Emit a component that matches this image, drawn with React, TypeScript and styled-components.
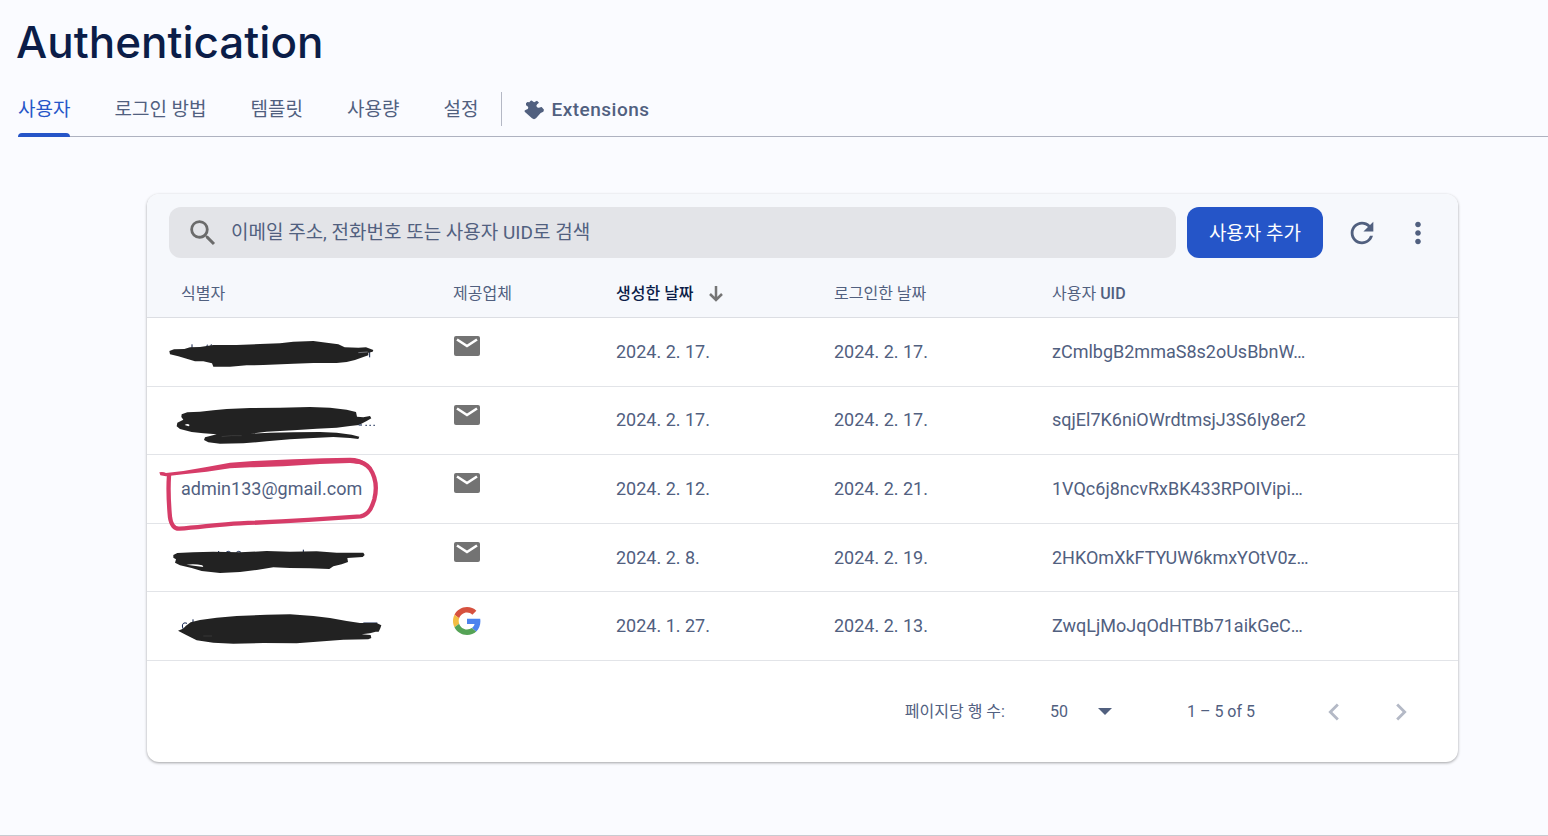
import React from 'react';
import styled, { createGlobalStyle, css } from 'styled-components';

const ink = '#51607f';
const navy = '#0b1d48';
const blue = '#2555c8';
const line = '#e2e4e8';

const GlobalStyle = createGlobalStyle`
  *, *::before, *::after { box-sizing: border-box; }
  body {
    margin: 0;
    background: #fafbff;
    color: ${ink};
    font-family: Roboto, 'Noto Sans CJK KR', sans-serif;
  }
  button, input, select { font: inherit; color: inherit; }
`;

const Page = styled.div`
  display: flex;
  flex-direction: column;
  min-height: 100vh;
  border-bottom: 1px solid #c9cbd1;
`;

const Title = styled.h1`
  margin: 0;
  padding: 15px 16px 0;
  font-family: Inter, sans-serif;
  font-size: 44px;
  line-height: 54px;
  font-weight: 500;
  color: ${navy};
`;

const TabBar = styled.nav`
  display: flex;
  height: 68px;
  margin-left: 18px;
  padding-top: 12px;
  border-bottom: 1px solid #aeb2c0;
`;

const Tab = styled.a<{ $active?: boolean }>`
  position: relative;
  display: flex;
  align-items: center;
  height: 56px;
  margin-right: 44px;
  padding-top: 1px;
  font-size: 19px;
  line-height: 28px;
  white-space: nowrap;
  text-decoration: none;
  color: ${ink};
  ${(p) =>
    p.$active &&
    css`
      color: ${blue};
      &::after {
        content: '';
        position: absolute;
        left: 0;
        right: 0;
        bottom: 0;
        height: 4px;
        border-radius: 4px 4px 0 0;
        background: ${blue};
      }
    `}
`;

const ExtensionsTab = styled(Tab)`
  gap: 7px;
  margin: 0;
  font-weight: 500;
  letter-spacing: 0.5px;
`;

const TabDivider = styled.span`
  width: 1px;
  height: 34px;
  margin: 11px 22px 0 -21px;
  background: #b4b8c5;
`;

const Content = styled.main`
  padding: 57px 90px 73px 147px;
`;

const Card = styled.section`
  overflow: hidden;
  border-radius: 12px;
  background: #fff;
  box-shadow: 0 1px 3px rgba(0, 0, 0, 0.36);
`;

const Toolbar = styled.div`
  display: flex;
  align-items: center;
  padding: 13px 23px 12px 22px;
  background: #f6f8fc;
`;

const SearchBox = styled.label`
  display: flex;
  flex: 1;
  align-items: center;
  gap: 11px;
  height: 51px;
  margin-right: 11px;
  padding: 0 17px;
  border-radius: 12px;
  background: #e3e4e8;
`;

const SearchInput = styled.input`
  flex: 1;
  min-width: 0;
  padding: 0;
  border: 0;
  outline: 0;
  background: none;
  font-size: 19px;
  line-height: 28px;
  &::placeholder { color: ${ink}; opacity: 1; }
`;

const AddButton = styled.button`
  height: 51px;
  padding: 0 22px 3px;
  border: 0;
  border-radius: 12px;
  background: ${blue};
  color: #fff;
  font-size: 19px;
`;

const IconButton = styled.button`
  display: grid;
  place-items: center;
  width: 34px;
  height: 34px;
  padding: 0;
  border: 0;
  background: none;
`;

const ToolActions = styled.div`
  display: flex;
  gap: 22px;
  padding-left: 22px;
`;

const Table = styled.table`
  width: 100%;
  table-layout: fixed;
  border-collapse: separate;
  border-spacing: 0;
  text-align: left;
`;

const Col = styled.col<{ $w?: number }>`
  width: ${(p) => (p.$w ? `${p.$w}px` : 'auto')};
`;

const HeadCell = styled.th<{ $sorted?: boolean }>`
  height: 48px;
  padding: 0;
  border-bottom: 1px solid #dcdee3;
  background: #f6f8fc;
  font-size: 16px;
  line-height: 24px;
  font-weight: ${(p) => (p.$sorted ? 500 : 400)};
  color: ${(p) => (p.$sorted ? navy : ink)};
  &:first-child { padding-left: 34px; }
`;

const Latin = styled.span`
  font-weight: 500;
`;

const SortLabel = styled.span`
  display: flex;
  align-items: center;
  gap: 15px;
`;

const Body = styled.tbody`
  height: 343px;
`;

const Cell = styled.td`
  position: relative;
  padding: 0;
  border-bottom: 1px solid ${line};
  font-size: 18px;
  line-height: 24px;
  &:first-child { padding-left: 34px; }
`;

const ProviderCell = styled(Cell)`
  padding-bottom: 11px;
  svg { display: block; }
`;

const Marker = styled.svg`
  position: absolute;
  top: 0;
  left: 3px;
  width: 240px;
  height: 69px;
  overflow: visible;
  pointer-events: none;
`;

const Pager = styled.div`
  display: flex;
  align-items: center;
  justify-content: flex-end;
  height: 101px;
  padding-right: 40px;
  font-size: 16px;
  line-height: 24px;
`;

const PageSize = styled.label`
  display: flex;
  align-items: center;
  gap: 45px;
`;

const SelectWrap = styled.span`
  display: flex;
  align-items: center;
  width: 62px;
`;

const Select = styled.select`
  flex: 1;
  min-width: 0;
  padding: 0;
  border: 0;
  outline: 0;
  appearance: none;
  background: none;
`;

const Range = styled.span`
  margin: 0 62px 0 75px;
`;

const PageButtons = styled.div`
  display: flex;
  gap: 33px;
`;

const Icon = ({ d, size = 34, fill = ink }: { d: string; size?: number; fill?: string }) => (
  <svg width={size} height={size} viewBox="0 0 24 24" fill={fill} aria-hidden="true">
    <path d={d} />
  </svg>
);

const icons = {
  search:
    'M15.5 14h-.79l-.28-.27A6.471 6.471 0 0 0 16 9.5 6.5 6.5 0 1 0 9.5 16c1.61 0 3.09-.59 4.23-1.57l.27.28v.79l5 4.99L20.49 19l-4.99-5zm-6 0C7.01 14 5 11.99 5 9.5S7.01 5 9.5 5 14 7.01 14 9.5 11.99 14 9.5 14z',
  refresh:
    'M17.65 6.35A7.958 7.958 0 0 0 12 4c-4.42 0-7.99 3.58-7.99 8s3.57 8 7.99 8c3.73 0 6.84-2.55 7.73-6h-2.08A5.99 5.99 0 0 1 12 18c-3.31 0-6-2.69-6-6s2.69-6 6-6c1.66 0 3.14.69 4.22 1.78L13 11h7V4l-2.35 2.35z',
  more:
    'M12 8c1.1 0 2-.9 2-2s-.9-2-2-2-2 .9-2 2 .9 2 2 2zm0 2c-1.1 0-2 .9-2 2s.9 2 2 2 2-.9 2-2-.9-2-2-2zm0 6c-1.1 0-2 .9-2 2s.9 2 2 2 2-.9 2-2-.9-2-2-2z',
  left: 'M15.41 7.41L14 6l-6 6 6 6 1.41-1.41L10.83 12z',
  right: 'M10 6L8.59 7.41 13.17 12l-4.58 4.59L10 18l6-6z',
};

const PuzzleIcon = () => (
  <svg width="20" height="20" viewBox="0 0 60 60" fill={ink} aria-hidden="true">
    <path d="M6 10 L10 6 L16 7 L20 2 Q23 0 26 4 Q30 9 36 4 L39 2 L45 8 Q38 12 37 17 Q38 24 45 23 Q50 22 53 21 L60 29 L58 35 L50 39 L36 55 Q30 60 24 55 L2 35 Q0 31 6 29 Q13 28 13 23 Q12 18 6 16 Z" />
  </svg>
);

const MailIcon = () => (
  <svg width="28" height="28" viewBox="0 0 28 28" role="img" aria-label="이메일">
    <rect x="1" y="4" width="26" height="20" rx="2" fill="#737373" />
    <path d="M4 7.500l10 6.500 10-6.500" fill="none" stroke="#fff" strokeWidth="2.600" />
  </svg>
);

const GoogleIcon = () => (
  <svg width="28" height="28" viewBox="0 0 48 48" role="img" aria-label="Google">
    <path fill="#d6513f" d="M24 9.500c3.540 0 6.710 1.220 9.210 3.600l6.850-6.850C35.900 2.380 30.470 0 24 0 14.620 0 6.510 5.380 2.560 13.220l7.980 6.190C12.430 13.720 17.740 9.500 24 9.500z" />
    <path fill="#4c83ee" d="M46.980 24.550c0-1.570-.15-3.090-.38-4.550H24v9.020h12.940c-.58 2.960-2.260 5.480-4.780 7.180l7.730 6c4.510-4.180 7.090-10.360 7.090-17.650z" />
    <path fill="#f3bd42" d="M10.530 28.590c-.48-1.450-.76-2.990-.76-4.590s.27-3.140.76-4.590l-7.980-6.190C.92 16.460 0 20.120 0 24c0 3.880.92 7.540 2.560 10.780l7.970-6.190z" />
    <path fill="#55a356" d="M24 48c6.480 0 11.930-2.130 15.890-5.810l-7.730-6c-2.150 1.450-4.920 2.300-8.160 2.300-6.260 0-11.570-4.220-13.470-9.910l-7.980 6.190C6.510 42.620 14.620 48 24 48z" />
  </svg>
);

const scribbleInk = '#222';

const marks: Record<string, React.ReactNode> = {
  first: (
    <Marker viewBox="0 -21 720 207" aria-hidden="true">
      <path d="M126 58v12M172 59l-2 8M184 58l-2 8M659 80v17" stroke={navy} strokeWidth="3" fill="none" />
      <path fill={scribbleInk} d="M58 78 L72 73 103 72 120 67 150 66 190 60 260 60 330 57 390 55 430 50 490 48 530 53 565 58 584 67 625 68 648 67 670 75 668 80 655 83 655 91 640 96 615 105 590 111 560 114 490 114 430 116 340 120 290 121 240 125 190 125 186 115 160 109 135 109 110 101 85 94 60 88Z" />
      <path d="M625 83l28-2" stroke="#9a9ca5" strokeWidth="2" />
    </Marker>
  ),
  second: (
    <Marker viewBox="0 186 720 207" aria-hidden="true">
      <path fill={scribbleInk} d="M95 268 L112 262 150 260 190 256 230 252 300 249 390 248 480 246 540 248 590 254 618 261 621 275 640 277 660 273 664 280 650 288 627 300 600 303 560 308 500 311 430 316 350 320 300 326 360 323 430 322 510 321 560 323 605 329 628 335 625 342 600 339 550 336 490 339 420 343 350 349 280 355 210 356 175 352 162 345 165 337 180 333 200 328 160 325 125 321 90 312 80 304 82 293 100 284 94 276Z" />
      <path d="M104 300q8-6 15 0l-3 4Z" fill="#fff" />
      <path d="M215 335q30-5 60-3" stroke="#444" strokeWidth="2" fill="none" />
      <path d="M626 300h10M646 301h5M658 301h5M670 301h5" stroke={ink} strokeWidth="4" />
    </Marker>
  ),
  circle: (
    <Marker viewBox="0 15 720 207" aria-hidden="true">
      <path fill="none" stroke="#d63c68" strokeWidth="13" strokeLinecap="round" strokeLinejoin="round" d="M57 76 C54 120 57 170 60 202 C63 225 74 237 88 236 C150 232 210 222 270 220 C390 215 500 209 632 199 C658 193 666 170 673 148 C681 116 678 83 660 56 C648 40 632 35 615 33" />
      <path fill="#d63c68" d="M28 67 Q40 65 48 69 L100 63 170 51 240 38 310 33 430 28 520 25 600 23 Q630 23 646 38 L637 43 600 39 510 42 400 49 300 52 240 55 170 65 100 73 48 79 31 76Z" />
    </Marker>
  ),
  fourth: (
    <Marker viewBox="0 222 720 207" aria-hidden="true">
      <path d="M206 303v8M228 307q7-6 14 0M259 307q7-6 14 0M460 299v8" stroke={navy} strokeWidth="3" fill="none" />
      <path fill={scribbleInk} d="M70 315 L82 309 130 307 190 305 270 307 350 303 420 305 500 304 560 308 640 308 644 315 638 321 592 324 594 336 575 343 550 349 538 357 480 355 420 354 370 352 320 360 270 366 210 369 155 363 125 354 90 346 75 338 78 328 70 323Z" />
      <path d="M109 344q25-4 48 2l3 5Z" fill="#fff" />
    </Marker>
  ),
  fifth: (
    <Marker viewBox="0 36 720 207" aria-hidden="true">
      <path d="M111 130q-13-5-14 8 0 10 8 13M129 118v14M640 129h42" stroke={navy} strokeWidth="3" fill="none" />
      <path fill={scribbleInk} d="M84 152 L99 146 108 137 122 127 150 120 200 113 260 108 350 104 420 103 490 108 540 114 590 123 630 129 680 129 694 136 691 145 686 155 677 155 660 160 635 163 662 165 664 174 655 178 580 179 500 185 440 190 340 189 250 191 190 188 140 181 110 166Z" />
      <path d="M160 168h26" stroke="#444" strokeWidth="2" />
    </Marker>
  ),
};

const users = [
  { mark: 'first', id: '', google: false, created: '2024. 2. 17.', signedIn: '2024. 2. 17.', uid: 'zCmlbgB2mmaS8s2oUsBbnW…' },
  { mark: 'second', id: '', google: false, created: '2024. 2. 17.', signedIn: '2024. 2. 17.', uid: 'sqjEl7K6niOWrdtmsjJ3S6Iy8er2' },
  { mark: 'circle', id: 'admin133@gmail.com', google: false, created: '2024. 2. 12.', signedIn: '2024. 2. 21.', uid: '1VQc6j8ncvRxBK433RPOIVipi…' },
  { mark: 'fourth', id: '', google: false, created: '2024. 2. 8.', signedIn: '2024. 2. 19.', uid: '2HKOmXkFTYUW6kmxYOtV0z…' },
  { mark: 'fifth', id: '', google: true, created: '2024. 1. 27.', signedIn: '2024. 2. 13.', uid: 'ZwqLjMoJqOdHTBb71aikGeC…' },
];

export default function App() {
  return (
    <Page>
      <GlobalStyle />
      <Title>Authentication</Title>
      <TabBar>
        <Tab href="#users" $active aria-current="page">사용자</Tab>
        <Tab href="#providers">로그인 방법</Tab>
        <Tab href="#templates">템플릿</Tab>
        <Tab href="#usage">사용량</Tab>
        <Tab href="#settings">설정</Tab>
        <TabDivider />
        <ExtensionsTab href="#extensions">
          <PuzzleIcon />
          Extensions
        </ExtensionsTab>
      </TabBar>
      <Content>
        <Card>
          <Toolbar>
            <SearchBox>
              <Icon d={icons.search} fill="#6b6b6b" />
              <SearchInput type="text" aria-label="사용자 검색" placeholder="이메일 주소, 전화번호 또는 사용자 UID로 검색" />
            </SearchBox>
            <AddButton type="button">사용자 추가</AddButton>
            <ToolActions>
              <IconButton type="button" aria-label="새로고침"><Icon d={icons.refresh} /></IconButton>
              <IconButton type="button" aria-label="더보기"><Icon d={icons.more} /></IconButton>
            </ToolActions>
          </Toolbar>
          <Table>
            <colgroup>
              <Col $w={306} />
              <Col $w={163} />
              <Col $w={218} />
              <Col $w={218} />
              <Col />
            </colgroup>
            <thead>
              <tr>
                <HeadCell scope="col">식별자</HeadCell>
                <HeadCell scope="col">제공업체</HeadCell>
                <HeadCell scope="col" $sorted aria-sort="descending">
                  <SortLabel>
                    생성한 날짜
                    <svg width="14" height="16" viewBox="0 0 14 16" fill="none" stroke="#757575" strokeWidth="2.500" aria-hidden="true">
                      <path d="M7 0v14M1 8l6 6 6-6" />
                    </svg>
                  </SortLabel>
                </HeadCell>
                <HeadCell scope="col">로그인한 날짜</HeadCell>
                <HeadCell scope="col">사용자 <Latin>UID</Latin></HeadCell>
              </tr>
            </thead>
            <Body>
              {users.map((u) => (
                <tr key={u.uid}>
                  <Cell>{u.id}{marks[u.mark]}</Cell>
                  <ProviderCell>{u.google ? <GoogleIcon /> : <MailIcon />}</ProviderCell>
                  <Cell>{u.created}</Cell>
                  <Cell>{u.signedIn}</Cell>
                  <Cell>{u.uid}</Cell>
                </tr>
              ))}
            </Body>
          </Table>
          <Pager>
            <PageSize>
              페이지당 행 수:
              <SelectWrap>
                <Select defaultValue="50">
                  <option>50</option>
                  <option>100</option>
                  <option>250</option>
                </Select>
                <svg width="14" height="7" viewBox="0 0 14 7" fill={ink} aria-hidden="true"><path d="M0 0h14L7 7z" /></svg>
              </SelectWrap>
            </PageSize>
            <Range>1 – 5 of 5</Range>
            <PageButtons>
              <IconButton type="button" aria-label="이전 페이지"><Icon d={icons.left} fill="#b4b9c6" /></IconButton>
              <IconButton type="button" aria-label="다음 페이지"><Icon d={icons.right} fill="#b4b9c6" /></IconButton>
            </PageButtons>
          </Pager>
        </Card>
      </Content>
    </Page>
  );
}
